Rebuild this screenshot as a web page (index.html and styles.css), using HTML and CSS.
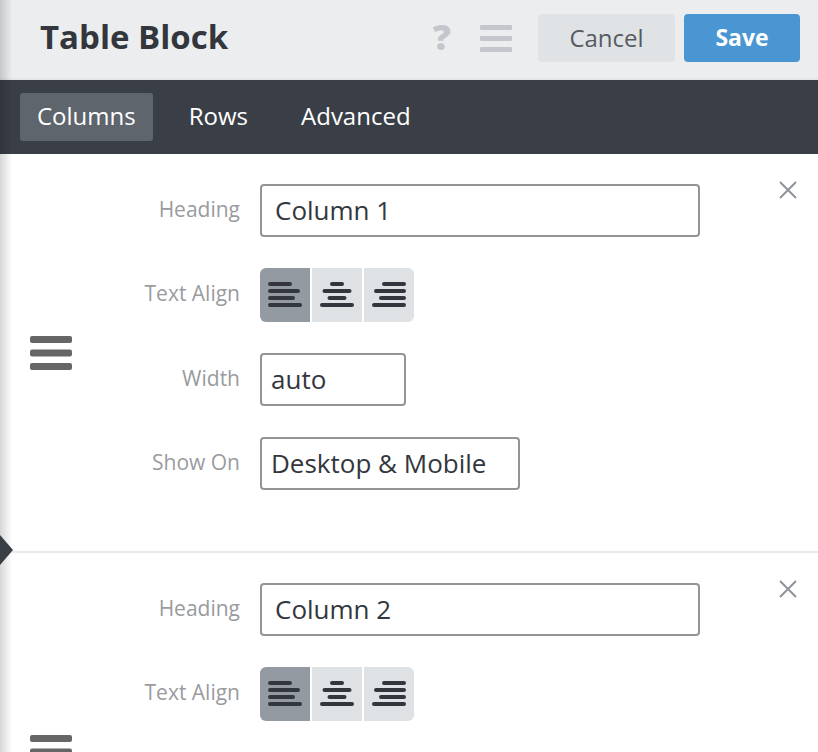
FILE: index.html
```html
<!DOCTYPE html>
<html lang="en">
<head>
    <meta charset="UTF-8">
    <meta name="viewport" content="width=device-width, initial-scale=1.0">
    <title>Table Block</title>
    <link rel="stylesheet" href="styles.css">
</head>
<body>
    <div class="panel">
        <!-- Header -->
        <div class="header">
            <h1>Table Block</h1>
            <div class="header-actions">
                <span class="help">?</span>
                <svg class="menu" width="32" height="28" viewBox="0 0 32 28">
                    <rect x="0" y="1" width="32" height="5" rx="1"/>
                    <rect x="0" y="12" width="32" height="5" rx="1"/>
                    <rect x="0" y="23" width="32" height="5" rx="1"/>
                </svg>
                <button class="btn btn-cancel">Cancel</button>
                <button class="btn btn-save">Save</button>
            </div>
        </div>

        <!-- Tabs -->
        <div class="tabs">
            <button class="tab active">Columns</button>
            <button class="tab">Rows</button>
            <button class="tab">Advanced</button>
        </div>

        <!-- Column blocks -->
        <div class="column-list">
            <div class="column-item">
                <svg class="drag" width="42" height="34" viewBox="0 0 42 34">
                    <rect x="0" y="0" width="42" height="7" rx="2"/>
                    <rect x="0" y="13.5" width="42" height="7" rx="2"/>
                    <rect x="0" y="27" width="42" height="7" rx="2"/>
                </svg>
                <div class="fields">
                    <label>Heading</label>
                    <div class="input wide">Column 1</div>

                    <label>Text Align</label>
                    <div class="align-group">
                        <button class="align active">
                            <svg width="34" height="26" viewBox="0 0 34 26"><rect x="0" y="0" width="24" height="4" rx="2"/><rect x="0" y="7" width="32" height="4" rx="2"/><rect x="0" y="14" width="27" height="4" rx="2"/><rect x="0" y="21" width="34" height="4" rx="2"/></svg>
                        </button>
                        <button class="align">
                            <svg width="34" height="26" viewBox="0 0 34 26"><rect x="10" y="0" width="14" height="4" rx="2"/><rect x="2.5" y="7" width="29" height="4" rx="2"/><rect x="7.5" y="14" width="19" height="4" rx="2"/><rect x="0" y="21" width="34" height="4" rx="2"/></svg>
                        </button>
                        <button class="align">
                            <svg width="34" height="26" viewBox="0 0 34 26"><rect x="10" y="0" width="24" height="4" rx="2"/><rect x="2" y="7" width="32" height="4" rx="2"/><rect x="7" y="14" width="27" height="4" rx="2"/><rect x="0" y="21" width="34" height="4" rx="2"/></svg>
                        </button>
                    </div>

                    <label>Width</label>
                    <div class="input small">auto</div>

                    <label>Show On</label>
                    <div class="input medium">Desktop &amp; Mobile</div>
                </div>
                <svg class="remove" width="20" height="20" viewBox="0 0 20 20">
                    <path d="M2 2 L18 18 M18 2 L2 18"/>
                </svg>
            </div>

            <div class="column-item">
                <svg class="drag" width="42" height="34" viewBox="0 0 42 34">
                    <rect x="0" y="0" width="42" height="7" rx="2"/>
                    <rect x="0" y="13.5" width="42" height="7" rx="2"/>
                    <rect x="0" y="27" width="42" height="7" rx="2"/>
                </svg>
                <div class="fields">
                    <label>Heading</label>
                    <div class="input wide">Column 2</div>

                    <label>Text Align</label>
                    <div class="align-group">
                        <button class="align active">
                            <svg width="34" height="26" viewBox="0 0 34 26"><rect x="0" y="0" width="24" height="4" rx="2"/><rect x="0" y="7" width="32" height="4" rx="2"/><rect x="0" y="14" width="27" height="4" rx="2"/><rect x="0" y="21" width="34" height="4" rx="2"/></svg>
                        </button>
                        <button class="align">
                            <svg width="34" height="26" viewBox="0 0 34 26"><rect x="10" y="0" width="14" height="4" rx="2"/><rect x="2.5" y="7" width="29" height="4" rx="2"/><rect x="7.5" y="14" width="19" height="4" rx="2"/><rect x="0" y="21" width="34" height="4" rx="2"/></svg>
                        </button>
                        <button class="align">
                            <svg width="34" height="26" viewBox="0 0 34 26"><rect x="10" y="0" width="24" height="4" rx="2"/><rect x="2" y="7" width="32" height="4" rx="2"/><rect x="7" y="14" width="27" height="4" rx="2"/><rect x="0" y="21" width="34" height="4" rx="2"/></svg>
                        </button>
                    </div>

                    <label>Width</label>
                    <div class="input small">auto</div>

                    <label>Show On</label>
                    <div class="input medium">Desktop &amp; Mobile</div>
                </div>
                <svg class="remove" width="20" height="20" viewBox="0 0 20 20">
                    <path d="M2 2 L18 18 M18 2 L2 18"/>
                </svg>
            </div>
        </div>
    </div>
</body>
</html>
```

FILE: styles.css
```css
* {
    margin: 0;
    padding: 0;
    box-sizing: border-box;
    font-family: "Open Sans", Lato, sans-serif;
}

body {
    background: #fff;
    color: #33373d;
    overflow: hidden;
}

/* shadow of the panel beside this one */
body::before {
    content: "";
    position: fixed;
    top: 0;
    left: 0;
    bottom: 0;
    width: 12px;
    background: linear-gradient(to right, rgba(0, 0, 0, 0.16), rgba(0, 0, 0, 0));
    z-index: 5;
    pointer-events: none;
}

.header {
    height: 80px;
    background: #ecedef;
    border-bottom: 2px solid #e3e5e8;
    display: flex;
    align-items: center;
    justify-content: space-between;
    padding: 0 18px 2px 40px;
}

.header h1 {
    font-size: 33px;
    font-weight: 700;
    color: #33373d;
    padding-bottom: 4px;
}

.header-actions {
    display: flex;
    align-items: center;
}

.help {
    font-size: 36px;
    font-weight: 800;
    color: #c3c7cc;
    margin-right: 29px;
    line-height: 1;
    padding-bottom: 2px;
}

.menu {
    fill: #c3c7cc;
    margin-right: 26px;
}

.btn {
    height: 48px;
    border: none;
    border-radius: 4px;
    font-size: 24px;
    padding-bottom: 2px;
    cursor: pointer;
}

.btn-cancel {
    width: 137px;
    background: #e0e3e6;
    color: #575b61;
    margin-right: 9px;
}

.btn-save {
    width: 116px;
    background: #4a96d2;
    color: #fff;
    font-weight: 700;
    font-size: 23px;
}

.tabs {
    height: 74px;
    background: #3a3f47;
    display: flex;
    align-items: center;
    padding: 0 20px;
    gap: 19px;
}

.tab {
    height: 48px;
    padding: 0 17px 4px;
    background: none;
    border: none;
    border-radius: 3px;
    color: #fff;
    font-size: 24px;
    cursor: pointer;
}

.tab.active {
    background: #5e656d;
}

.column-item {
    position: relative;
    display: flex;
    align-items: center;
    padding: 30px 0 30px 30px;
    border-bottom: 2px solid #e8e9ea;
}

/* little marker on the divider */
.column-item + .column-item::before {
    content: "";
    position: absolute;
    left: 0;
    top: -18px;
    border-top: 15px solid transparent;
    border-bottom: 15px solid transparent;
    border-left: 13px solid #3a3f47;
    z-index: 6;
}

.drag {
    fill: #666;
    flex-shrink: 0;
}

.fields {
    display: grid;
    grid-template-columns: 168px auto;
    column-gap: 20px;
    row-gap: 31px;
    align-items: center;
    justify-items: start;
    padding-bottom: 31px;
}

.fields label {
    justify-self: end;
    font-size: 21px;
    color: #999b9e;
    padding-bottom: 4px;
}

.input {
    height: 53px;
    border: 2px solid #929497;
    border-radius: 4px;
    padding: 0 12px 2px 13px;
    display: flex;
    align-items: center;
    font-size: 26px;
    color: #33373d;
}

.input.wide {
    width: 440px;
}

.input.small {
    width: 146px;
    padding-left: 9px;
}

.input.medium {
    width: 260px;
    padding-left: 9px;
}

.align-group {
    display: flex;
    gap: 2px;
    height: 54px;
    border-radius: 6px;
    overflow: hidden;
}

.align {
    width: 50px;
    border: none;
    background: #dfe2e5;
    display: flex;
    align-items: center;
    justify-content: center;
    fill: #33373d;
}

.align.active {
    background: #939aa2;
}

.remove {
    position: absolute;
    top: 26px;
    right: 20px;
    stroke: #8f9399;
    stroke-width: 2;
    fill: none;
}
```
